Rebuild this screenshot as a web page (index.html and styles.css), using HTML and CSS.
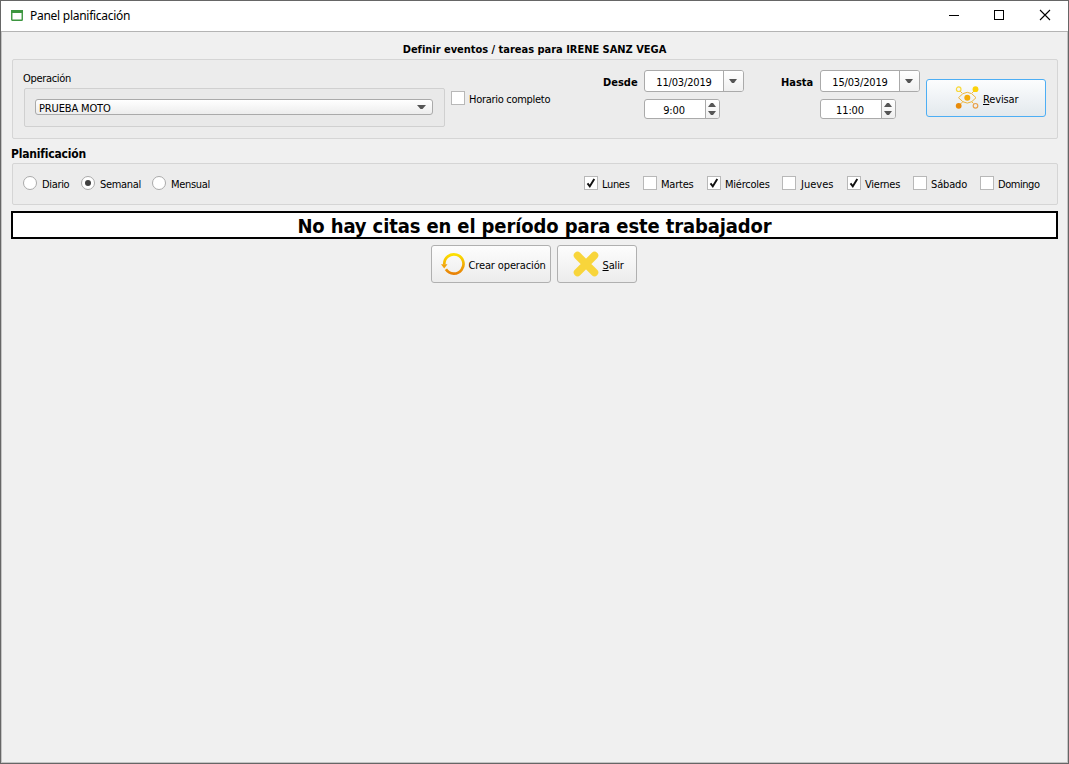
FILE: index.html
```
<!DOCTYPE html>
<html lang="es">
<head>
<meta charset="utf-8">
<title>Panel planificación</title>
<link rel="stylesheet" href="styles.css">
</head>
<body>
<div class="window">
  <header class="titlebar">
    <svg class="app-icon" width="12" height="11" viewBox="0 0 12 11"><rect x=".75" y=".75" width="10.5" height="9.5" rx=".5" fill="#fff" stroke="#3c963f" stroke-width="1.4"/><path d="M0 1.5h12" stroke="#3c963f" stroke-width="3"/></svg>
    <span class="title">Panel planificación</span>
    <div class="controls">
      <svg width="46" height="30" viewBox="0 0 46 30"><path d="M18 14.5h10" stroke="#000"/></svg>
      <svg width="46" height="30" viewBox="0 0 46 30"><rect x="17.5" y="9.5" width="9" height="9" fill="none" stroke="#000"/></svg>
      <svg width="46" height="30" viewBox="0 0 46 30"><path d="M17 9l10 10M27 9L17 19" stroke="#000" stroke-width="1.1"/></svg>
    </div>
  </header>
  <main class="content">
    <h1 class="heading"><span>Definir eventos / tareas para IRENE SANZ VEGA</span></h1>
    <section class="panel range">
      <div class="operation">
        <div class="label">Operación</div>
        <div class="group">
          <div class="combo"><span>PRUEBA MOTO</span><svg width="9" height="5" viewBox="0 0 9 5"><path d="M0 0h9L5.500 4h-2z" fill="#555"/></svg></div>
        </div>
      </div>
      <label class="check full"><i class="box"></i><span>Horario completo</span></label>
      <div class="period">
        <b class="from">Desde</b>
        <div class="fields">
          <div class="field date"><span>11/03/2019</span><i class="drop"><svg width="8" height="5" viewBox="0 0 8 5"><path d="M0 0h8L5 4H3z" fill="#555"/></svg></i></div>
          <div class="field time"><span>9:00</span><i class="spin"><svg width="8" height="12" viewBox="0 0 8 12"><path d="M0 4h8L5 0H3zM0 8h8l-3 4H3z" fill="#555"/></svg></i></div>
        </div>
      </div>
      <div class="period until">
        <b class="to">Hasta</b>
        <div class="fields">
          <div class="field date"><span>15/03/2019</span><i class="drop"><svg width="8" height="5" viewBox="0 0 8 5"><path d="M0 0h8L5 4H3z" fill="#555"/></svg></i></div>
          <div class="field time"><span>11:00</span><i class="spin"><svg width="8" height="12" viewBox="0 0 8 12"><path d="M0 4h8L5 0H3zM0 8h8l-3 4H3z" fill="#555"/></svg></i></div>
        </div>
      </div>
      <button class="btn review">
        <svg width="24" height="24" viewBox="0 0 24 24" fill="none"><path d="M3.500 11.700Q12.300 .9 21 11.700Q12.300 22.500 3.500 11.700z" stroke="#efb63b"/><circle cx="12.300" cy="11.700" r="3" fill="#f3ac0b"/><path d="M17 7l2-2M5.500 18L8 15.500M5 5l2 2M18.500 17.500l-2-2" stroke="#efb63b"/><circle cx="3.700" cy="3.200" r="2.300" fill="#f4f5f6" stroke="#f7d93c" stroke-width="1.200"/><circle cx="20.500" cy="3.200" r="2.900" fill="#fbd20a"/><circle cx="3.700" cy="19.800" r="2.900" fill="#e88b0a"/><circle cx="20.500" cy="19.800" r="2.300" fill="#eceef0" stroke="#e9a04a" stroke-width="1.200"/></svg>
        <span><u>R</u>evisar</span>
      </button>
    </section>
    <h2 class="subheading">Planificación</h2>
    <section class="panel schedule">
      <label class="check daily"><i class="radio"></i><span>Diario</span></label>
      <label class="check weekly"><i class="radio on"></i><span>Semanal</span></label>
      <label class="check monthly"><i class="radio"></i><span>Mensual</span></label>
      <label class="check mon"><i class="box"><svg width="14" height="14" viewBox="0 0 14 14"><path d="M3.500 7.300l2.300 3L10.300 3" fill="none" stroke="#111" stroke-width="1.900"/></svg></i><span>Lunes</span></label>
      <label class="check tue"><i class="box"></i><span>Martes</span></label>
      <label class="check wed"><i class="box"><svg width="14" height="14" viewBox="0 0 14 14"><path d="M3.500 7.300l2.300 3L10.300 3" fill="none" stroke="#111" stroke-width="1.900"/></svg></i><span>Miércoles</span></label>
      <label class="check thu"><i class="box"></i><span>Jueves</span></label>
      <label class="check fri"><i class="box"><svg width="14" height="14" viewBox="0 0 14 14"><path d="M3.500 7.300l2.300 3L10.300 3" fill="none" stroke="#111" stroke-width="1.900"/></svg></i><span>Viernes</span></label>
      <label class="check sat"><i class="box"></i><span>Sábado</span></label>
      <label class="check sun"><i class="box"></i><span>Domingo</span></label>
    </section>
    <div class="notice"><span>No hay citas en el período para este trabajador</span></div>
    <div class="actions">
      <button class="btn create">
        <svg width="24" height="24" viewBox="0 0 24 24" fill="none"><defs><linearGradient id="sun" x1="0" y1="0" x2="0" y2="1"><stop offset="0" stop-color="#fce000"/><stop offset="1" stop-color="#e88208"/></linearGradient></defs><path d="M3.300 12.500A9.600 9.600 0 1 1 4.900 17.300" stroke="url(#sun)" stroke-width="2.700"/><path d="M0 12.300h6.500L3.200 16.500z" fill="#f0a30c"/></svg>
        <span>Crear operación</span>
      </button>
      <button class="btn exit">
        <svg width="26" height="26" viewBox="0 0 26 26"><path d="M4.500 4.500l17 17M21.500 4.500l-17 17" stroke="#f8d53b" stroke-width="7.500" stroke-linecap="round"/></svg>
        <span><u>S</u>alir</span>
      </button>
    </div>
  </main>
</div>
</body>
</html>
```
FILE: styles.css
```
* { box-sizing: border-box; }
body { margin: 0; font: 11px/14px "DejaVu Sans Condensed", "DejaVu Sans", sans-serif; font-stretch: condensed; color: #000; }
.window { width: 1069px; height: 764px; border: 1px solid #666; background: #f0f0f0; overflow: hidden; }
.titlebar { height: 31px; background: #fff; border-bottom: 1px solid #b4b4b4; display: flex; align-items: center; padding-left: 10px; }
.app-icon { margin-bottom: 2px; }
.title { margin-left: 7px; font: 12px/16px "Noto Sans", sans-serif; letter-spacing: -.27px; }
.controls { display: flex; margin-left: auto; margin-right: -1px; }
.content { height: 731px; border: 1px solid #c4c4c4; border-top: 0; padding: 9px 9px 0; }
span, .label { white-space: nowrap; letter-spacing: -.33px; }
svg { display: block; flex: none; }
i { font-style: normal; }
.heading { margin: 0 0 3px; height: 15px; font: bold 11px/17px "DejaVu Sans Condensed", sans-serif; text-align: center; }
.heading span { letter-spacing: -.02px; }
.panel { margin-left: 1px; border: 1px solid #d5d5d5; border-radius: 2px; background: #ececec; display: flex; }
.range { height: 80px; }
.operation { width: 433px; padding: 12px 0 0 10px; }
.group { width: 421px; height: 39px; margin: 2px 0 0 1px; padding: 10px; border: 1px solid #d0d0d0; border-radius: 2px; background: #e9e9e9; }
.combo { height: 16px; width: 398px; border: 1px solid #aaa; border-radius: 3px; background: linear-gradient(#fff, #ededed); display: flex; align-items: center; justify-content: space-between; padding: 1px 6px 0 3px; }
.combo span { padding-top: 2px; letter-spacing: -.15px; }
.check { display: flex; align-items: flex-start; flex: none; }
.check span { margin: 2px 0 0 4px; }
.box, .radio { width: 14px; height: 14px; flex: none; border: 1px solid #b8b8b8; background: #fff; }
.box svg { margin: -1px; }
.radio { border-radius: 50%; border-color: #aaa; display: flex; align-items: center; justify-content: center; }
.radio.on::after { content: ""; width: 6px; height: 6px; border-radius: 50%; background: #404040; }
.full { margin: 31px 0 0 5px; width: 152px; }
.full span { letter-spacing: -.29px; }
.period { display: flex; padding-top: 10px; width: 141px; }
.until { width: 139px; margin-left: 37px; }
.period b { width: 41px; flex: none; font-size: 11px; line-height: 25px; }
.until b { width: 39px; }
.fields { display: flex; flex-direction: column; gap: 7px; }
.field { display: flex; height: 22px; border: 1px solid #aaa; border-radius: 3px; background: #fff; overflow: hidden; }
.date { width: 100px; }
.time { width: 76px; height: 20px; }
.field span { flex: 1; text-align: center; line-height: 23px; letter-spacing: -.15px; }
.time span { line-height: 21px; padding-right: 2px; }
.drop, .spin { display: flex; align-items: center; justify-content: center; border-left: 1px solid #aaa; background: linear-gradient(#fff, #efefef); }
.drop { width: 20px; padding-right: 1px; }
.spin { width: 14px; padding-right: 1px; }
.btn { display: flex; align-items: center; height: 38px; padding: 0; border: 1px solid #b0b0b0; border-radius: 3px; background: linear-gradient(#fdfdfd, #ececec); color: #000; font: inherit; }
.btn span { padding-top: 3px; letter-spacing: -.13px; }
.btn u { text-underline-offset: 1px; }
.review { width: 120px; margin: 19px 0 0 6px; padding-left: 28px; gap: 4px; border-color: #4daef4; background: linear-gradient(#fcfdfe, #e3e9ed); }
.subheading { margin: 8px 0 2px; font: bold 12px/14px "DejaVu Sans Condensed", sans-serif; letter-spacing: -.2px; }
.schedule { height: 42px; padding: 12px 0 0 10px; }
.daily { width: 58px; }
.weekly { width: 71px; }
.daily span, .weekly span, .monthly span { margin-left: 5px; }
.monthly { width: 432px; }
.mon { width: 59px; }
.tue { width: 64px; }
.wed { width: 75px; }
.thu { width: 65px; }
.fri { width: 66px; }
.sat { width: 67px; }
.tue span, .wed span, .fri span { letter-spacing: -.23px; }
.thu span { letter-spacing: 0; margin-left: 5px; }
.sat span { letter-spacing: -.15px; }
.sun span { letter-spacing: -.45px; }
.notice { height: 28px; margin-top: 6px; border: 2px solid #000; background: #fff; text-align: center; font: bold 20px/26px "DejaVu Sans Condensed", sans-serif; }
.notice span { letter-spacing: -.12px; }
.actions { display: flex; justify-content: center; gap: 6px; margin: 6px 2px 0 0; }
.create { width: 120px; padding-left: 9px; gap: 4px; }
.exit { width: 80px; padding-left: 15px; gap: 4px; }
```
